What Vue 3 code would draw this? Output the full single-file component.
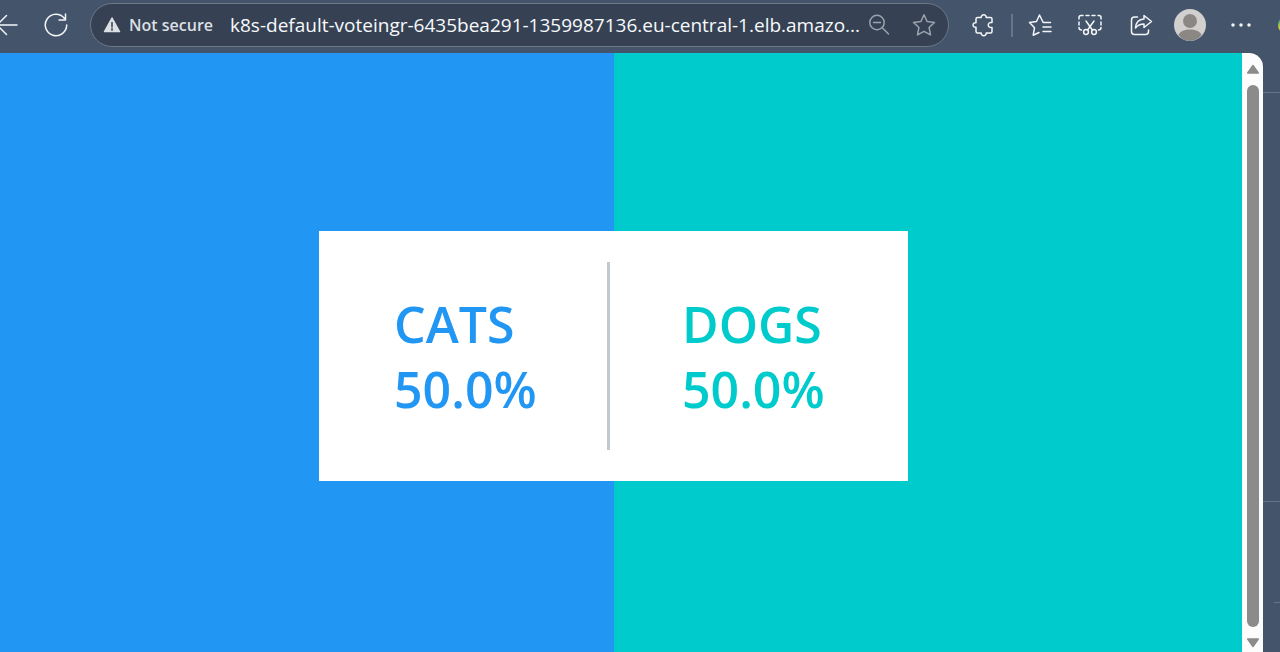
<script setup>
const choices = [
  { id: 'cats', label: 'CATS', share: '50.0%' },
  { id: 'dogs', label: 'DOGS', share: '50.0%' },
]
const address = 'k8s-default-voteingr-6435bea291-1359987136.eu-central-1.elb.amazo...'
</script>

<template>
  <div class="browser">
    <header class="toolbar">
      <button class="icon back" aria-label="Back">
        <svg viewBox="0 0 24 24"><path d="M21 12H1M10.500 2.500 1 12l9.500 9.500" /></svg>
      </button>
      <button class="icon reload" aria-label="Reload">
        <svg viewBox="0 0 24 24"><path d="M20.300 5.200A10.700 10.700 0 1 0 22.700 12M21.500 1v6h-6.500" /></svg>
      </button>

      <div class="address">
        <button class="security">
          <svg viewBox="0 0 18 18" aria-hidden="true">
            <path class="warn" d="M9 2 16.500 15.500h-15Z" />
            <path class="mark" d="M9 6.500v4.500M9 12.800v1.500" />
          </svg>
          <span>Not secure</span>
        </button>
        <input class="url" type="text" :value="address" aria-label="Address" />
        <button class="icon dim" aria-label="Zoom out">
          <svg viewBox="0 0 24 24"><circle cx="10" cy="9.500" r="7.200" /><path d="m15.300 14.800 6.200 6.200M6.500 9.500h7" /></svg>
        </button>
        <button class="icon dim star" aria-label="Add to favorites">
          <svg viewBox="0 0 24 24"><path d="M12 1.800 15.100 8.500 22.500 9.400 17.100 14.500 18.500 21.900 12 18.300 5.500 21.900 6.900 14.500 1.500 9.400 8.900 8.500Z" /></svg>
        </button>
      </div>

      <button class="icon extensions" aria-label="Extensions">
        <svg viewBox="0 0 24 24"><path d="M5.500 4.500h3.700c-.3-3.700 5.400-3.700 5 0h4.300q1.500 0 1.500 1.500v3.500c-5-.9-5 5.900 0 5v4q0 1.500-1.500 1.500h-4.300c.4 3.500-5.300 3.500-5 0H5.500Q4 20 4 18.500v-4.200c-3.900.5-3.900-5 0-4.600V6q0-1.500 1.500-1.500Z" /></svg>
      </button>
      <span class="separator"></span>
      <button class="icon" aria-label="Favorites">
        <svg viewBox="0 0 24 24"><path d="M22.500 9.500h-7.300L11.500 2 8.500 8.500 1.500 9.500l5 5.200-1.300 7.500L11 19.500M15 14h8M15 18.500h8" /></svg>
      </button>
      <button class="icon capture" aria-label="Screenshot">
        <svg viewBox="0 0 24 24">
          <path d="M1 6V4.500q0-2 2-2h2M8 2.500h3M14 2.500h3M20 2.500h1q2 0 2 2v1.500M23 9v3M23 14.500q0 2.500-2.500 2.500M1 9v3M1 14.500Q1 17 3.500 17M8 8l6.600 9.200M16 8 9.400 17.200" />
          <circle cx="8" cy="19" r="2.400" /><circle cx="16" cy="19" r="2.400" />
        </svg>
      </button>
      <button class="icon share" aria-label="Share">
        <svg viewBox="0 0 24 24"><path d="M8.500 4H5.500Q2.500 4 2.500 7v11.500q0 3 3 3h11q3 0 3-3V17M15 2.500l7.500 6-7.500 6v-3.500q-5.500 0-8.500 4 .5-8.500 8.500-9Z" /></svg>
      </button>
      <button class="avatar" aria-label="Profile">
        <svg viewBox="0 0 32 32"><circle cx="16" cy="12" r="7" /><path d="M4.500 26C6 22 11 20.500 16 20.500S26 22 27.500 26Q23 32 16 32T4.500 26Z" /></svg>
      </button>
      <button class="icon more" aria-label="More">
        <svg viewBox="0 0 24 24"><circle cx="4" cy="12" r="1" /><circle cx="12" cy="12" r="1" /><circle cx="20" cy="12" r="1" /></svg>
      </button>
      <span class="assistant"></span>
    </header>

    <div class="body">
      <div class="view">
        <main class="stage">
          <section class="card">
            <div v-for="c in choices" :key="c.id" class="choice" :class="c.id">
              <div>{{ c.label }}</div>
              <div>{{ c.share }}</div>
            </div>
          </section>
        </main>
        <div class="scrollbar">
          <svg class="cap" viewBox="0 0 14 10"><path d="M7 1.500 12.300 9H1.700Z" /></svg>
          <span class="thumb"></span>
          <svg class="cap" viewBox="0 0 14 10"><path d="M7 8.500 12.300 1H1.700Z" /></svg>
        </div>
      </div>
      <aside class="side">
        <span class="rule"></span>
        <span class="rule"></span>
        <span class="rule short"></span>
      </aside>
    </div>
  </div>
</template>

<style>
body {
  background: #44546a;
}
</style>

<style scoped>
.browser {
  display: flex;
  flex-direction: column;
  height: 100vh;
  overflow: hidden;
  background: #44546a;
  font-family: "Open Sans", "Noto Sans", sans-serif;
}
button {
  padding: 0;
  border: 0;
  background: none;
  font: inherit;
  color: inherit;
}
.toolbar {
  display: flex;
  flex: none;
  align-items: center;
  height: 50px;
  padding-bottom: 3px;
  overflow: hidden;
}
.icon {
  flex: none;
  width: 24px;
  height: 24px;
}
svg {
  display: block;
  width: 100%;
  height: 100%;
  fill: none;
  stroke: #f3f6f9;
  stroke-width: 1.5;
  stroke-linecap: round;
  stroke-linejoin: round;
}
.back {
  margin-left: -4px;
}
.reload {
  margin: 0 22px 0 24px;
}
.address {
  display: flex;
  flex: 1;
  align-items: center;
  min-width: 0;
  box-sizing: border-box;
  height: 44px;
  padding: 0 12px;
  border: 1px solid #6c7888;
  border-radius: 22px;
  background: #364254;
}
.security {
  display: flex;
  flex: none;
  align-items: center;
  gap: 8px;
  width: 127px;
  color: #dcdfe3;
  font-size: 16px;
  font-weight: 600;
  white-space: nowrap;
}
.security svg {
  flex: none;
  width: 18px;
  height: 18px;
}
.security .warn {
  fill: #dcdfe3;
  stroke: #dcdfe3;
}
.security .mark {
  stroke: #364254;
}
.url {
  flex: 1;
  min-width: 0;
  height: 40px;
  padding: 0;
  border: 0;
  outline: 0;
  background: none;
  color: #f7f9fb;
  font: 19px "Open Sans", "Noto Sans", sans-serif;
}
.dim svg {
  stroke: #9aa2ad;
}
.star {
  margin-left: 21px;
}
.extensions {
  margin-left: 23px;
}
.separator {
  flex: none;
  width: 2px;
  height: 23px;
  margin: 0 15px;
  background: #68768a;
}
.capture {
  margin: 0 27px 0 26px;
}
.avatar {
  flex: none;
  width: 32px;
  height: 32px;
  margin: 0 23px 0 21px;
  overflow: hidden;
  border-radius: 50%;
  background: #d2d0ce;
}
.avatar svg {
  fill: #8b8785;
  stroke: none;
}
.more svg {
  fill: #f3f6f9;
}
.assistant {
  flex: none;
  width: 24px;
  height: 18px;
  margin: 0 -22px 0 25px;
  border-radius: 9px;
  background: linear-gradient(#2ba38a 20%, #d8cf3c 65%);
}
.body {
  display: flex;
  flex: 1;
  min-height: 0;
}
.view {
  display: flex;
  flex: 1;
  overflow: hidden;
  border-top-right-radius: 14px;
  background: #fcfcfc;
}
.stage {
  display: flex;
  flex: 1;
  align-items: center;
  justify-content: center;
  box-sizing: border-box;
  padding: 7px 15px 0 0;
  background: linear-gradient(90deg, #2196f3 calc(50% - 7px), #00cbcc calc(50% - 7px));
}
.card {
  display: grid;
  grid-template-columns: 1fr 1fr;
  box-sizing: border-box;
  width: 48%;
  padding: 31px 7px 31px 0;
  background: #fff;
}
.choice {
  padding: 30px 0 28px 75px;
  font-size: 50px;
  font-weight: 600;
  line-height: 65px;
}
.cats {
  border-right: 3px solid #c0c9ce;
  color: #2196f3;
}
.dogs {
  padding-left: 72px;
  color: #00cbcc;
}
.scrollbar {
  display: flex;
  flex: none;
  flex-direction: column;
  align-items: center;
  gap: 11px;
  box-sizing: border-box;
  width: 21px;
  padding: 11px 0 4px;
}
.cap {
  flex: none;
  width: 14px;
  height: 10px;
  fill: #8b8b8b;
  stroke: #8b8b8b;
}
.thumb {
  flex: 1;
  width: 12px;
  border-radius: 6px;
  background: #8b8b8b;
}
.side {
  display: grid;
  flex: none;
  grid-template-rows: 40px 409px 101px;
  width: 17px;
}
.rule {
  border-bottom: 1px solid #64748a;
}
.short {
  margin-left: 11px;
}
</style>
